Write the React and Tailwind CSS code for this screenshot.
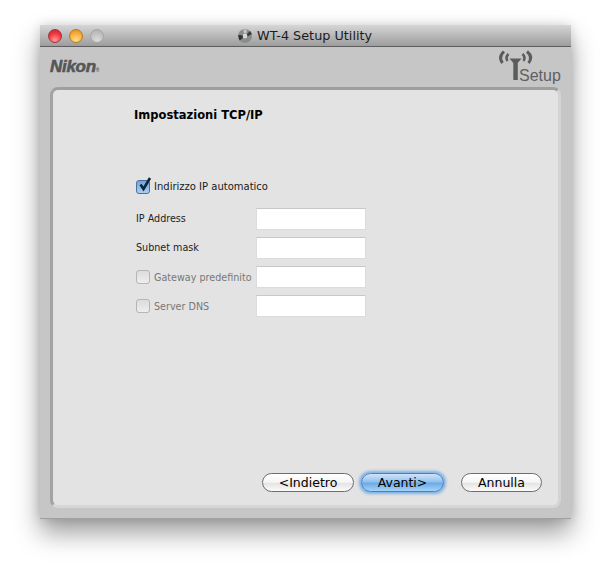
const font = { fontFamily: '"DejaVu Sans", sans-serif' };

function Lights() {
  return (
    <div className="flex gap-[7px]">
      <span className="w-[14px] h-[14px] rounded-full border border-[#a8323a] bg-[radial-gradient(circle_at_50%_85%,#ff9a9a_0%,#f03a42_55%,#c8202a_100%)]" />
      <span className="w-[14px] h-[14px] rounded-full border border-[#b87a20] bg-[radial-gradient(circle_at_50%_85%,#ffe08a_0%,#f8b040_55%,#d88a20_100%)]" />
      <span className="w-[14px] h-[14px] rounded-full border border-[#a8a8a8] bg-[radial-gradient(circle_at_50%_85%,#dcdcdc_0%,#c0c0c0_60%,#a8a8a8_100%)]" />
    </div>
  );
}

function UtilityIcon() {
  return (
    <svg width="16" height="14" viewBox="0 0 16 14">
      <circle cx="8" cy="7" r="7" fill="#8a8c8d" />
      <circle cx="8" cy="7" r="2.400" fill="#d8d8d8" />
      <path d="M1 6 L6 6.500 L5.500 9.500 L2.500 11.500 Z" fill="#2f3233" />
      <path d="M10 5 L13 2 L15 5 L10.500 7.500 Z" fill="#3a3d3e" />
      <path d="M6 0.500 L10 0.500 L9.500 4 L7 4 Z" fill="#c4c4c4" />
    </svg>
  );
}

function SetupLogo() {
  return (
    <div className="relative w-[62px] h-[36px]">
      <svg width="44" height="32" viewBox="0 0 44 32" className="absolute -left-[2px] -top-[1px]" fill="none" stroke="#5b5c5e">
        <path d="M7 2.500 Q1 8 5.500 14" strokeWidth="3" />
        <path d="M11.500 5 Q8 8.500 10.500 12" strokeWidth="2.600" />
        <path d="M30 2.500 Q36.500 8 31.500 14" strokeWidth="3" />
        <path d="M25.500 5 Q29 8.500 26.500 12" strokeWidth="2.600" />
        <path d="M12.500 9.500 L24.500 9.500 L20.800 14 L20.800 31 L16.300 31 L16.300 14 Z" fill="#5b5c5e" stroke="none" />
      </svg>
      <span className="absolute left-[20px] top-[16px] text-[16px] leading-[20px] text-[#5f6062]" style={{ fontFamily: '"Liberation Sans", sans-serif' }}>Setup</span>
    </div>
  );
}

function Check({ checked }) {
  if (checked) {
    return (
      <span className="relative w-[14px] h-[14px] shrink-0 rounded-[3px] border border-[#4a6f98] bg-gradient-to-b from-[#6fa6de] to-[#a9d0f2]">
        <svg width="17" height="17" viewBox="0 0 17 17" className="absolute -top-[5px] left-0">
          <path d="M3.500 8.500 L6.500 13 L13 2" fill="none" stroke="#10243c" strokeWidth="2.600" />
        </svg>
      </span>
    );
  }
  return <span className="w-[14px] h-[14px] shrink-0 rounded-[3px] border border-[#b5b5b5] bg-gradient-to-b from-[#dcdcdc] to-[#eeeeee]" />;
}

function Field() {
  return <div className="w-[110px] h-[22px] shrink-0 bg-white border border-[#dcdcdc] border-t-[#c8c8c8]" />;
}

function Row({ children }) {
  return (
    <div className="flex items-center h-[22px] w-[230px] justify-between">
      {children}
      <Field />
    </div>
  );
}

function PillButton({ children, primary, className }) {
  if (primary) {
    return (
      <button className={`h-[19px] rounded-full border border-[#4d7fb5] shadow-[0_0_3px_2px_#7fb0e4] bg-[linear-gradient(#cfe4f8_0%,#8fc0ee_48%,#6aa8e6_52%,#a4d4f8_100%)] text-[12.500px] leading-[15px] text-black ${className}`}>
        {children}
      </button>
    );
  }
  return (
    <button className={`h-[19px] rounded-full border border-[#6e6e6e] bg-[linear-gradient(#ffffff_0%,#f6f6f6_48%,#e4e4e4_55%,#fbfbfb_100%)] text-[12.500px] leading-[15px] text-black ${className}`}>
      {children}
    </button>
  );
}

export default function App() {
  return (
    <div className="w-[610px] h-[574px] bg-white pt-[25px] pl-[40px] overflow-hidden" style={font}>
      <div className="w-[531px] h-[494px] flex flex-col bg-[#c6c6c6] border-b border-[#a0a0a0] shadow-[0_14px_24px_rgba(0,0,0,0.38),0_0_10px_rgba(0,0,0,0.14)]">
        <div className="relative h-[22px] shrink-0 flex items-center pl-[8px] border-b border-[#5e5e5e] bg-gradient-to-b from-[#d6d6d6] to-[#9d9d9d]">
          <Lights />
          <div className="absolute left-[197px] top-[3px] flex items-center gap-[4px] text-[12.800px] leading-[16px] text-[#1c1c1c]">
            <UtilityIcon />
            <span>WT-4 Setup Utility</span>
          </div>
        </div>

        <div className="flex justify-between h-[40px] shrink-0 pl-[10px] pr-[10px] pt-[3px]">
          <span className="mt-[8px] text-[17px] leading-[17px] font-bold italic tracking-[-0.3px] text-[#55565a] [-webkit-text-stroke:0.6px_#55565a]" style={{ fontFamily: '"Liberation Sans", sans-serif' }}>
            Nikon<span className="text-[5px] not-italic align-baseline [-webkit-text-stroke:0]">®</span>
          </span>
          <SetupLogo />
        </div>

        <div className="mx-[10px] h-[421px] rounded-[8px] bg-[#e3e3e3] border-[3px] border-t-[#9f9f9f] border-l-[#a3a3a3] border-r-[#d3d3d3] border-b-[#d6d6d6] flex flex-col pl-[81px]">
          <h1 className="mt-[17px] text-[11.500px] leading-[16px] font-bold text-black">Impostazioni TCP/IP</h1>

          <label className="mt-[55px] ml-[2px] flex items-center gap-[4px] h-[18px] text-[10px] text-[#1a1a1a]">
            <Check checked />
            <span className="pb-[2px]">Indirizzo IP automatico</span>
          </label>

          <div className="mt-[12px] ml-[2px] flex flex-col gap-[7px] text-[9.600px] text-[#222222]">
            <Row><span>IP Address</span></Row>
            <Row><span>Subnet mask</span></Row>
            <Row>
              <span className="flex items-center gap-[4px] text-[#777777] whitespace-nowrap"><Check /><span className="pt-[2px]">Gateway predefinito</span></span>
            </Row>
            <Row>
              <span className="flex items-center gap-[4px] text-[#777777]"><Check /><span className="pt-[2px]">Server DNS</span></span>
            </Row>
          </div>

          <div className="mt-auto mb-[13px] ml-[128px] flex">
            <PillButton className="w-[92px]">&lt;Indietro</PillButton>
            <PillButton primary className="w-[83px] ml-[7px]">Avanti&gt;</PillButton>
            <PillButton className="w-[81px] ml-[17px]">Annulla</PillButton>
          </div>
        </div>
      </div>
    </div>
  );
}
